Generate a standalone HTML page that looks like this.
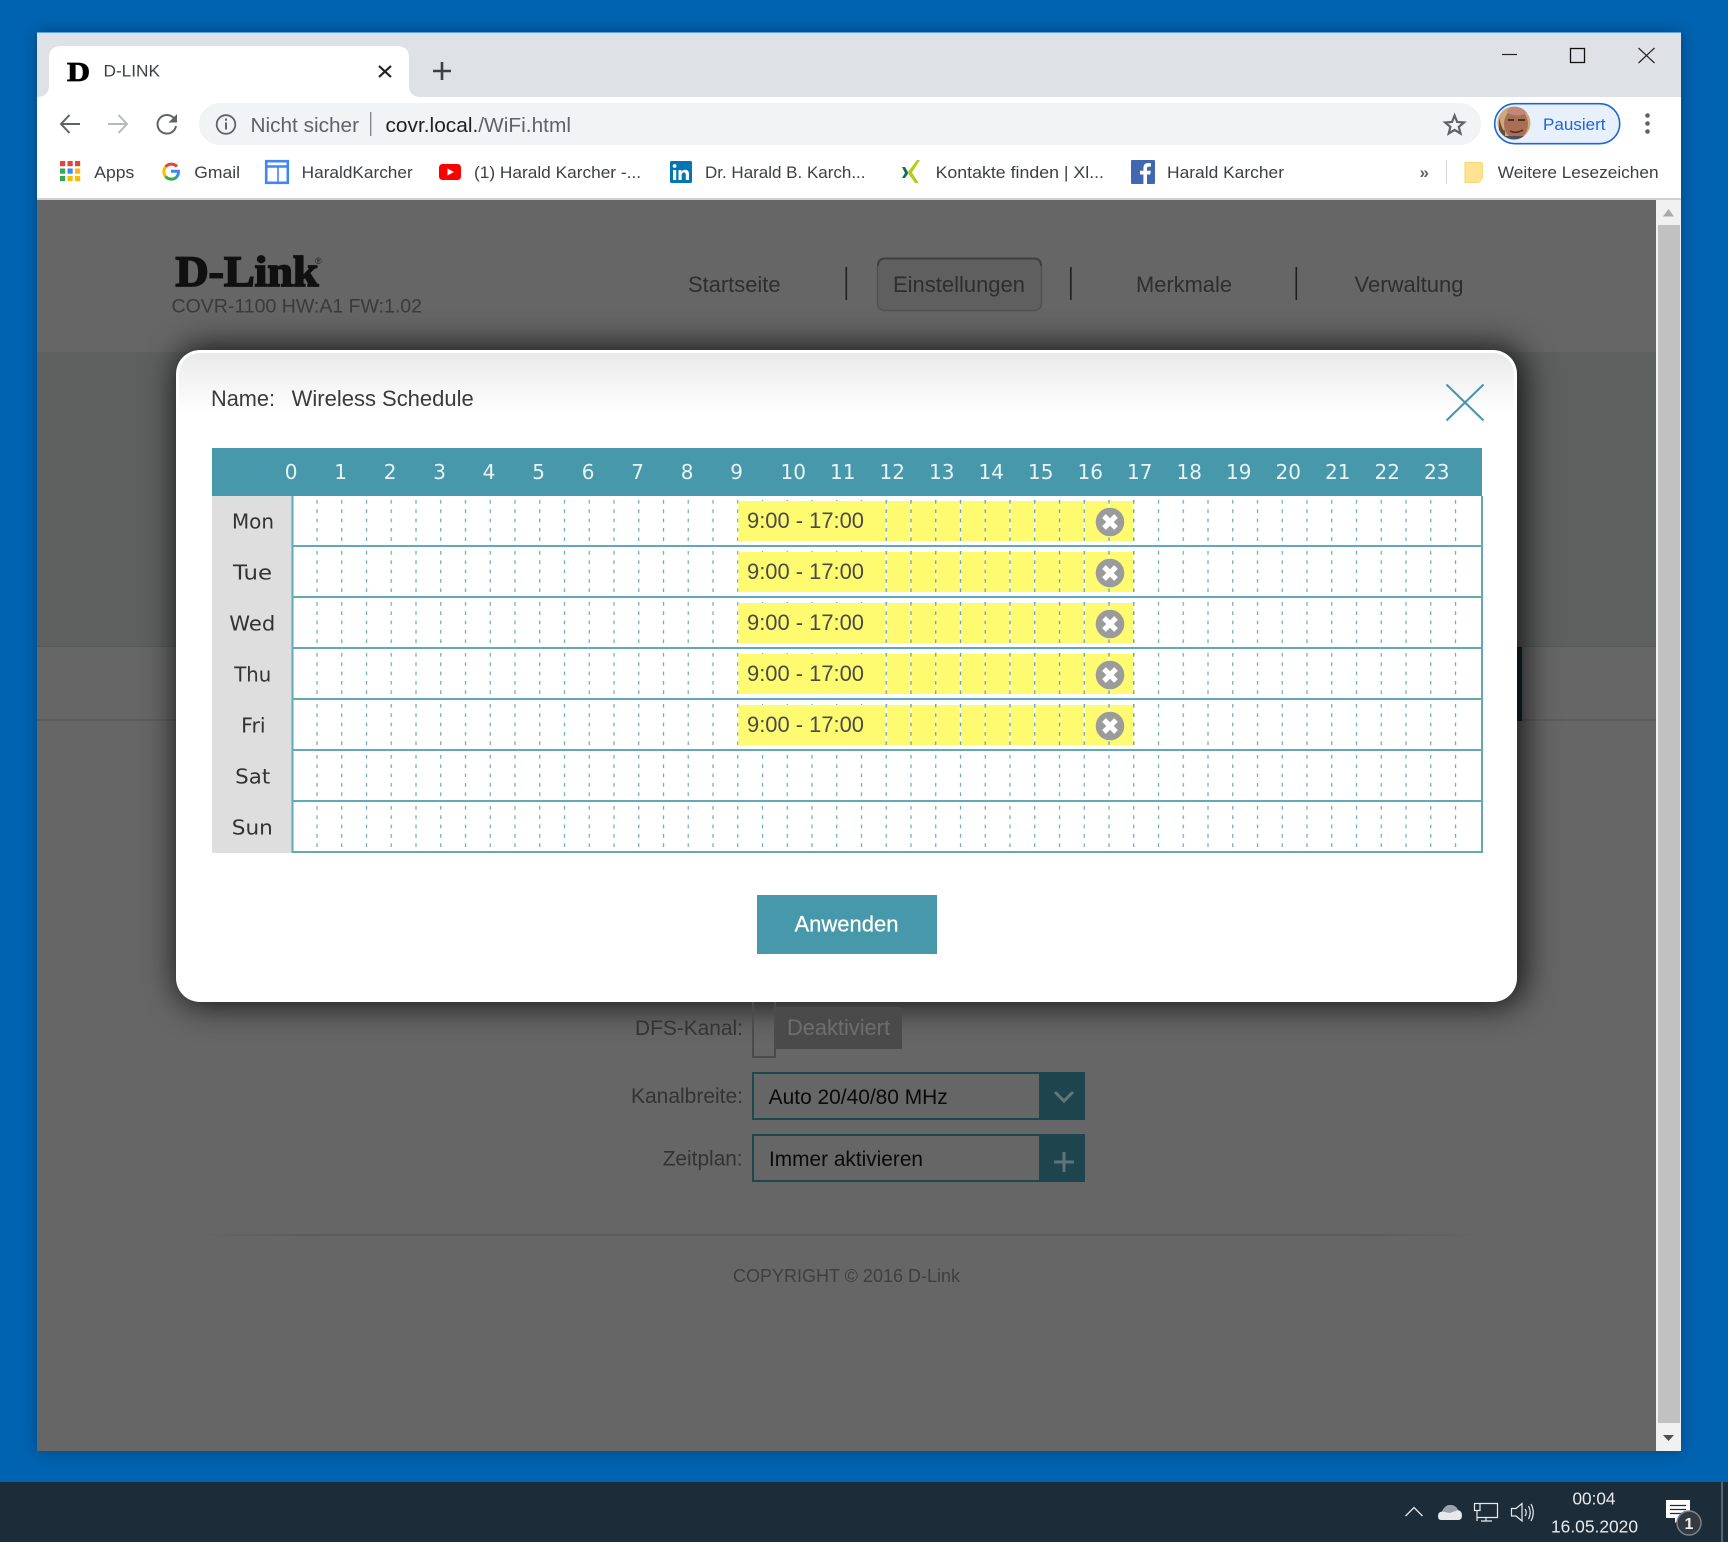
<!DOCTYPE html>
<html lang="de">
<head>
<meta charset="utf-8">
<title>D-LINK</title>
<style>
html,body{margin:0;padding:0;width:1728px;height:1542px;overflow:hidden;background:#0063b1}
div{position:absolute;box-sizing:border-box}
#win{left:37px;top:32px;width:1644px;height:1419px;background:#fff;box-shadow:0 0 16px rgba(0,0,0,.3)}
#strip{left:37px;top:33px;width:1644px;height:64px;background:#dee1e6}
#topline{left:37px;top:32px;width:1644px;height:1px;background:#5da3e6}
#sep{left:37px;top:198px;width:1644px;height:2px;background:#d0d1d3}
#page{left:37px;top:200px;width:1619px;height:1251px;background:#666}
#band{left:37px;top:352px;width:1619px;height:295px;background:#5e6060;border-bottom:1px solid #585858}
#band2{left:37px;top:647px;width:1619px;height:74px;background:#666;border-bottom:2px solid #5c5c5c}
#sliver{left:1510px;top:647px;width:12px;height:74px;background:#13252c}
#foot{left:200px;top:1234px;width:1280px;height:2px;background:linear-gradient(90deg,#666,#5a5a5a 10%,#5a5a5a 90%,#666)}
#sb{left:1656px;top:200px;width:25px;height:1251px;background:#f1f1f1}
#thumb{left:1658px;top:225px;width:22px;height:1198px;background:#c1c1c1}
#task{left:0;top:1482px;width:1728px;height:60px;background:#1c2c39}
#modal{left:176px;top:350px;width:1341px;height:652px;background:#fff;border-radius:24px;box-shadow:4px 0 32px 4px rgba(0,0,0,.76)}
#mg{left:3px;top:3px;width:1335px;height:62px;border-radius:21px 21px 0 0;background:linear-gradient(#e9e9e9,#f3f3f3 40%,#fff)}
svg{position:absolute;left:0;top:0}
text{font-family:"Liberation Sans",sans-serif}
.bm{font-size:17px;fill:#3c4043}
.nav{font-size:22px;fill:#2e2e2e}
.h{font-family:"DejaVu Sans",sans-serif;font-size:20px;fill:#e9f3f5}
.d{font-family:"DejaVu Sans",sans-serif;font-size:20px;fill:#333;text-anchor:middle}
.t{font-size:22px;fill:#4a4a4a}
.l{font-size:20.9px;fill:#333}
</style>
</head>
<body>
<div id="win"></div>
<div id="strip"></div>
<div id="topline"></div>
<div id="sep"></div>
<div id="page"></div>
<div id="band"></div>
<div id="band2"></div>
<div id="sliver"></div>
<div id="foot"></div>
<div id="sb"></div>
<div id="thumb"></div>
<div id="task"></div>
<div id="modal"><div id="mg"></div></div>

<svg width="1728" height="1542" viewBox="0 0 1728 1542" xmlns="http://www.w3.org/2000/svg">
<defs>
<pattern id="dash" patternUnits="userSpaceOnUse" x="316.4" y="496" width="24.75" height="51">
<g fill="#4a9aac">
<rect x="0" y="4" width="1.2" height="3.7"/><rect x="0" y="13.3" width="1.2" height="3.7"/><rect x="0" y="22.6" width="1.2" height="3.7"/><rect x="0" y="32" width="1.2" height="3.7"/><rect x="0" y="41.3" width="1.2" height="3.7"/>
</g>
</pattern>
<pattern id="dashy" patternUnits="userSpaceOnUse" x="316.4" y="496" width="24.75" height="51">
<rect x="0" y="5" width="1.2" height="40" fill="#fff"/>
<g fill="#5c9fb0">
<rect x="0" y="4" width="1.2" height="3.7"/><rect x="0" y="13.3" width="1.2" height="3.7"/><rect x="0" y="22.6" width="1.2" height="3.7"/><rect x="0" y="32" width="1.2" height="3.7"/><rect x="0" y="41.3" width="1.2" height="3.7"/>
</g>
</pattern>
<clipPath id="av"><circle cx="1514" cy="123" r="16.5"/></clipPath>
</defs>

<!-- Tab -->
<path d="M37 97Q49 97 49 85V58Q49 46 61 46H397Q409 46 409 58V85Q409 97 421 97Z" fill="#fff"/>
<text x="67" y="81" font-size="27" font-weight="700" style="font-family:'Liberation Serif',serif" fill="#000" stroke="#000" stroke-width=".8" textLength="23" lengthAdjust="spacingAndGlyphs">D</text>
<text x="103.5" y="76.5" font-size="17" fill="#3c4043" textLength="56.5" lengthAdjust="spacingAndGlyphs">D-LINK</text>
<path d="M379 66L391 77M391 66L379 77" stroke="#222" stroke-width="2.2" fill="none"/>
<path d="M442 62V80M433 71H451" stroke="#3c4043" stroke-width="2.6" fill="none"/>

<!-- Window controls -->
<path d="M1502 54.5H1517" stroke="#222" stroke-width="1.2"/>
<rect x="1570.5" y="48.5" width="14" height="14" fill="none" stroke="#111" stroke-width="1.3"/>
<path d="M1638.5 48L1654.5 63M1654.5 48L1638.5 63" stroke="#222" stroke-width="1.2"/>

<!-- Toolbar -->
<path d="M80 124H61.5M69.5 115L61 124L69.5 133" stroke="#5f6368" stroke-width="2" fill="none"/>
<path d="M108 124H126.5M118.5 115L127 124L118.5 133" stroke="#b7babd" stroke-width="2" fill="none"/>
<path d="M174.5 119A9.3 9.3 0 1 0 176 126" stroke="#5f6368" stroke-width="2" fill="none"/>
<path d="M177 114V122.5H168.5Z" fill="#5f6368"/>
<rect x="199" y="103" width="1282" height="42" rx="21" fill="#f1f3f4"/>
<circle cx="226" cy="124.5" r="9.3" fill="none" stroke="#5f6368" stroke-width="1.8"/>
<rect x="225" y="122.5" width="2" height="7" fill="#5f6368"/><rect x="225" y="118.5" width="2" height="2.2" fill="#5f6368"/>
<text x="250.5" y="132" font-size="20.5" fill="#5f6368" textLength="108.5" lengthAdjust="spacingAndGlyphs">Nicht sicher</text>
<rect x="370" y="112" width="1.4" height="24" fill="#85888c"/>
<text x="385.5" y="132" font-size="20.5" fill="#5f6368" textLength="185.5" lengthAdjust="spacingAndGlyphs"><tspan fill="#202124">covr.local.</tspan>/WiFi.html</text>
<path d="M1454.6 115.5L1457.2 122L1464 122.5L1458.8 126.9L1460.5 133.5L1454.6 129.9L1448.7 133.5L1450.4 126.9L1445.2 122.5L1452 122Z" fill="none" stroke="#5f6368" stroke-width="2.2"/>
<rect x="1494.7" y="103.7" width="125" height="40" rx="20" fill="#e9f0fd" stroke="#1a66d8" stroke-width="1.6"/>
<g clip-path="url(#av)">
<rect x="1497" y="106" width="34" height="34" fill="#d0a878"/>
<ellipse cx="1516" cy="124" rx="12" ry="15" fill="#a96f55"/>
<ellipse cx="1517" cy="111" rx="10" ry="4.5" fill="#c0897a"/>
<path d="M1499 118Q1503 133 1505 130L1505 138L1499 138Z" fill="#5f5042"/>
<path d="M1508 120H1514M1518 120H1525" stroke="#3f251d" stroke-width="1.8"/>
<path d="M1510 131Q1516 134 1523 130" stroke="#5f2a22" stroke-width="1.6" fill="none"/>
<rect x="1498" y="136" width="34" height="6" fill="#4c5060"/>
</g>
<text x="1543" y="130" font-size="17" fill="#1a66d8" textLength="62.5" lengthAdjust="spacingAndGlyphs">Pausiert</text>
<circle cx="1647.5" cy="115.5" r="2.3" fill="#5f6368"/><circle cx="1647.5" cy="123.5" r="2.3" fill="#5f6368"/><circle cx="1647.5" cy="131.5" r="2.3" fill="#5f6368"/>

<!-- Bookmarks -->
<g>
<rect x="60" y="161" width="5.2" height="5.2" fill="#ea4335"/><rect x="67.5" y="161" width="5.2" height="5.2" fill="#ea4335"/><rect x="75" y="161" width="5.2" height="5.2" fill="#ea4335"/>
<rect x="60" y="168.5" width="5.2" height="5.2" fill="#34a853"/><rect x="67.5" y="168.5" width="5.2" height="5.2" fill="#4285f4"/><rect x="75" y="168.5" width="5.2" height="5.2" fill="#fbbc05"/>
<rect x="60" y="176" width="5.2" height="5.2" fill="#34a853"/><rect x="67.5" y="176" width="5.2" height="5.2" fill="#fbbc05"/><rect x="75" y="176" width="5.2" height="5.2" fill="#fbbc05"/>
</g>
<text class="bm" x="94.3" y="178" textLength="40" lengthAdjust="spacingAndGlyphs">Apps</text>
<g fill="none" stroke-width="3">
<path d="M177 166.5A7.8 7.8 0 0 0 165.5 166.8" stroke="#ea4335"/>
<path d="M165.5 166.8A7.8 7.8 0 0 0 165.5 176.5" stroke="#fbbc05"/>
<path d="M165.5 176.5A7.8 7.8 0 0 0 176.5 177.2" stroke="#34a853"/>
<path d="M176.5 177.2A7.8 7.8 0 0 0 178.4 171.3H171" stroke="#4285f4"/>
</g>
<text class="bm" x="194.3" y="178" textLength="45.7" lengthAdjust="spacingAndGlyphs">Gmail</text>
<rect x="266.2" y="161.2" width="21.6" height="21.6" fill="#fff" stroke="#4285f4" stroke-width="2.6"/>
<path d="M266 166.5H288" stroke="#4285f4" stroke-width="2.4"/><path d="M278 167V183" stroke="#4285f4" stroke-width="1.6"/>
<text class="bm" x="301.7" y="178" textLength="111" lengthAdjust="spacingAndGlyphs">HaraldKarcher</text>
<rect x="439" y="164" width="22" height="16" rx="3.5" fill="#f00"/>
<path d="M447.5 168.5L454 172L447.5 175.5Z" fill="#fff"/>
<text class="bm" x="474" y="178" textLength="167" lengthAdjust="spacingAndGlyphs">(1) Harald Karcher -...</text>
<rect x="670" y="161" width="22" height="22" rx="1.5" fill="#0077b5"/>
<rect x="673" y="170" width="3.2" height="10" fill="#fff"/><circle cx="674.6" cy="166" r="1.9" fill="#fff"/>
<path d="M678.5 170H681.5V171.5Q683 169.7 685.3 169.7Q689 169.7 689 174.3V180H685.8V175Q685.8 172.5 684 172.5Q681.7 172.5 681.7 175V180H678.5Z" fill="#fff"/>
<text class="bm" x="705" y="178" textLength="160.5" lengthAdjust="spacingAndGlyphs">Dr. Harald B. Karch...</text>
<path d="M902 167L905 167L908.5 173L905 178L902 178L905 173Z" fill="#0f6f63"/>
<path d="M917 160L920 160L912 172.5L918.5 183L915 183L907.5 172.5Z" fill="#b5cc18"/>
<text class="bm" x="935.6" y="178" textLength="168.4" lengthAdjust="spacingAndGlyphs">Kontakte finden | Xl...</text>
<rect x="1131" y="160" width="24" height="24" rx="1" fill="#4267b2"/>
<path d="M1147 184V174.5H1150.3L1150.8 170.7H1147V168.3Q1147 166.6 1149 166.6H1151V163.2Q1149.8 163 1148.2 163Q1143.4 163 1143.4 167.8V170.7H1140V174.5H1143.4V184Z" fill="#fff"/>
<text class="bm" x="1167" y="178" textLength="117" lengthAdjust="spacingAndGlyphs">Harald Karcher</text>
<text x="1419.5" y="178" font-size="17" fill="#5f6368" font-weight="700">»</text>
<rect x="1446" y="160" width="1" height="24" fill="#d5d7da"/>
<path d="M1465 162.5H1480Q1482.5 162.5 1482.5 165V178L1478.5 182.5H1465Z" fill="#fde293" stroke="#f5d97a" stroke-width="1.2"/>
<text class="bm" x="1497.8" y="178" textLength="160.8" lengthAdjust="spacingAndGlyphs">Weitere Lesezeichen</text>

<!-- Scrollbar arrows -->
<path d="M1668.5 209L1674 216.5H1663Z" fill="#a9a9a9"/>
<path d="M1663 1435H1674L1668.5 1441Z" fill="#505050"/>

<!-- Underlying page -->
<text x="175.5" y="286" font-size="43" font-weight="700" style="font-family:'Liberation Serif',serif" fill="#101010" stroke="#101010" stroke-width="1.7" textLength="143" lengthAdjust="spacingAndGlyphs">D-Link</text>
<text x="315" y="264" font-size="9" fill="#222">®</text>
<text x="171.5" y="312.5" font-size="19.3" fill="#3a3a3a" textLength="250.5" lengthAdjust="spacingAndGlyphs">COVR-1100 HW:A1 FW:1.02</text>
<text class="nav" x="688" y="292" textLength="92.5" lengthAdjust="spacingAndGlyphs">Startseite</text>
<rect x="845.5" y="267" width="1.6" height="33" fill="#1f1f1f"/>
<rect x="877.5" y="258.5" width="164" height="52" rx="7" fill="#5f5f5f" stroke="#505050" stroke-width="1.4"/>
<path d="M878 266Q878 258.5 885 258.5H1034Q1041 258.5 1041 266" fill="none" stroke="#3f3f3f" stroke-width="2"/>
<text class="nav" x="893" y="292" textLength="132" lengthAdjust="spacingAndGlyphs">Einstellungen</text>
<rect x="1070" y="267" width="1.6" height="33" fill="#1f1f1f"/>
<text class="nav" x="1136" y="292" textLength="96" lengthAdjust="spacingAndGlyphs">Merkmale</text>
<rect x="1295.5" y="267" width="1.6" height="33" fill="#1f1f1f"/>
<text class="nav" x="1354.5" y="292" textLength="109" lengthAdjust="spacingAndGlyphs">Verwaltung</text>

<!-- Modal content -->
<text x="211" y="406" font-size="21.8" fill="#3a3a3a" textLength="64" lengthAdjust="spacingAndGlyphs">Name:</text>
<text x="291.7" y="406" font-size="21.8" fill="#3a3a3a" textLength="182" lengthAdjust="spacingAndGlyphs">Wireless Schedule</text>
<path d="M1446.5 384.5L1483.5 420.5M1483.5 384.5L1446.5 420.5" stroke="#4797a9" stroke-width="2.1" fill="none"/>

<rect x="212" y="448" width="1270" height="48" fill="#4798ab"/>
<rect x="212" y="496" width="80" height="357" fill="#dedede"/>
<rect x="292" y="496" width="1190" height="357" fill="#fff"/>

<g>
<text class="h" x="284.8" y="479">0</text><text class="h" x="334.3" y="479">1</text><text class="h" x="383.8" y="479">2</text><text class="h" x="433.3" y="479">3</text><text class="h" x="482.6" y="479">4</text><text class="h" x="532.3" y="479">5</text><text class="h" x="581.8" y="479">6</text><text class="h" x="631.3" y="479">7</text><text class="h" x="680.8" y="479">8</text><text class="h" x="730.3" y="479">9</text>
<text class="h" x="780.5" y="479">10</text><text class="h" x="830" y="479">11</text><text class="h" x="879.5" y="479">12</text><text class="h" x="929" y="479">13</text><text class="h" x="978.5" y="479">14</text><text class="h" x="1028" y="479">15</text><text class="h" x="1077.5" y="479">16</text><text class="h" x="1127" y="479">17</text><text class="h" x="1176.5" y="479">18</text><text class="h" x="1226" y="479">19</text><text class="h" x="1275.5" y="479">20</text><text class="h" x="1325" y="479">21</text><text class="h" x="1374.5" y="479">22</text><text class="h" x="1424" y="479">23</text>
</g>

<text class="d" x="253" y="528.7" textLength="42" lengthAdjust="spacingAndGlyphs">Mon</text>
<text class="d" x="252.5" y="579.7" textLength="39" lengthAdjust="spacingAndGlyphs">Tue</text>
<text class="d" x="252.3" y="630.5" textLength="46" lengthAdjust="spacingAndGlyphs">Wed</text>
<text class="d" x="252.7" y="681.5" textLength="37" lengthAdjust="spacingAndGlyphs">Thu</text>
<text class="d" x="253.4" y="732.5" textLength="24.5" lengthAdjust="spacingAndGlyphs">Fri</text>
<text class="d" x="252.7" y="783.5" textLength="35" lengthAdjust="spacingAndGlyphs">Sat</text>
<text class="d" x="252.3" y="834.5" textLength="41" lengthAdjust="spacingAndGlyphs">Sun</text>

<rect x="316" y="496" width="1150" height="357" fill="url(#dash)" opacity=".85"/>

<g fill="#fffb70">
<rect x="738.4" y="501" width="395" height="40"/>
<rect x="738.4" y="552" width="395" height="40"/>
<rect x="738.4" y="603" width="395" height="40"/>
<rect x="738.4" y="654" width="395" height="40"/>
<rect x="738.4" y="705" width="395" height="40"/>
</g>
<rect x="885" y="496" width="250" height="255" fill="url(#dashy)"/>

<g fill="none" stroke="#62a9b8" stroke-width="2">
<path d="M292 546H1483M292 597H1483M292 648H1483M292 699H1483M292 750H1483M292 801H1483M292 852H1483"/>
<path d="M292.5 496V853M1482 496V853"/>
</g>

<text class="t" x="747" y="528" textLength="117" lengthAdjust="spacingAndGlyphs">9:00 - 17:00</text>
<text class="t" x="747" y="579" textLength="117" lengthAdjust="spacingAndGlyphs">9:00 - 17:00</text>
<text class="t" x="747" y="630" textLength="117" lengthAdjust="spacingAndGlyphs">9:00 - 17:00</text>
<text class="t" x="747" y="681" textLength="117" lengthAdjust="spacingAndGlyphs">9:00 - 17:00</text>
<text class="t" x="747" y="732" textLength="117" lengthAdjust="spacingAndGlyphs">9:00 - 17:00</text>

<g>
<circle cx="1110" cy="522" r="14.3" fill="#9b9b9b"/><path d="M1104 516L1116 528M1116 516L1104 528" stroke="#fff" stroke-width="5.2"/>
<circle cx="1110" cy="573" r="14.3" fill="#9b9b9b"/><path d="M1104 567L1116 579M1116 567L1104 579" stroke="#fff" stroke-width="5.2"/>
<circle cx="1110" cy="624" r="14.3" fill="#9b9b9b"/><path d="M1104 618L1116 630M1116 618L1104 630" stroke="#fff" stroke-width="5.2"/>
<circle cx="1110" cy="675" r="14.3" fill="#9b9b9b"/><path d="M1104 669L1116 681M1116 669L1104 681" stroke="#fff" stroke-width="5.2"/>
<circle cx="1110" cy="726" r="14.3" fill="#9b9b9b"/><path d="M1104 720L1116 732M1116 720L1104 732" stroke="#fff" stroke-width="5.2"/>
</g>

<rect x="757" y="895" width="180" height="59" fill="#4798ab"/>
<text x="794.5" y="931.5" font-size="22" fill="#fff" stroke="#fff" stroke-width=".25" textLength="104" lengthAdjust="spacingAndGlyphs">Anwenden</text>

<!-- Form under modal -->
<text class="l" x="635" y="1035" textLength="108" lengthAdjust="spacingAndGlyphs">DFS-Kanal:</text>
<path d="M753 1002V1057H775V1002" fill="none" stroke="#4b4b4b" stroke-width="2"/>
<rect x="776" y="1007" width="126" height="42" fill="#4a4a4a"/>
<text x="787" y="1035" font-size="22" fill="#6e6e6e" textLength="103" lengthAdjust="spacingAndGlyphs">Deaktiviert</text>

<text class="l" x="631" y="1103" textLength="112" lengthAdjust="spacingAndGlyphs">Kanalbreite:</text>
<rect x="753" y="1073" width="331" height="46" fill="#666" stroke="#1e4750" stroke-width="2"/>
<rect x="1039" y="1072" width="46" height="48" fill="#1e454e"/>
<path d="M1055 1092L1064 1101L1073 1092" fill="none" stroke="#66757b" stroke-width="3"/>
<text x="768.7" y="1104" font-size="20.9" fill="#0a0a0a" textLength="179" lengthAdjust="spacingAndGlyphs">Auto 20/40/80 MHz</text>

<text class="l" x="662.7" y="1165.7" textLength="80" lengthAdjust="spacingAndGlyphs">Zeitplan:</text>
<rect x="753" y="1135" width="331" height="46" fill="#666" stroke="#1e4750" stroke-width="2"/>
<rect x="1039" y="1134" width="46" height="48" fill="#1e454e"/>
<path d="M1064 1152V1172M1054 1162H1074" fill="none" stroke="#5e737a" stroke-width="3"/>
<text x="769" y="1166" font-size="20.9" fill="#0a0a0a" textLength="154" lengthAdjust="spacingAndGlyphs">Immer aktivieren</text>

<text x="733" y="1282" font-size="18" fill="#3e3e3e" textLength="227" lengthAdjust="spacingAndGlyphs">COPYRIGHT © 2016 D-Link</text>

<!-- Taskbar -->
<path d="M1405.5 1516L1414 1507.5L1422.5 1516" fill="none" stroke="#e8eaec" stroke-width="1.3"/>
<path d="M1441 1520Q1438 1520 1438 1516Q1438 1512 1442 1511.5Q1445 1504.5 1451 1505Q1456 1505.5 1458 1510Q1462 1511 1462 1515.5Q1462 1520 1458 1520Z" fill="#e6e8ea"/>
<path d="M1442 1511.5Q1445 1504.5 1451 1505Q1456 1505.5 1458 1510L1450 1513Z" fill="#9aa3ab"/>
<g fill="none" stroke="#e8eaec" stroke-width="1.2">
<path d="M1480 1503.5H1497.5V1517.5H1483"/>
<rect x="1474.5" y="1503.5" width="5.5" height="7"/>
<path d="M1477 1510.5V1521M1477 1517.5H1483M1486 1517.5V1521M1481 1521H1492"/>
<path d="M1511.5 1508.5H1516L1522 1503.5V1521L1516 1516H1511.5Z"/>
<path d="M1525 1509Q1527.5 1512.5 1525 1516M1528.5 1506Q1532 1512.5 1528.5 1519M1531 1504Q1535.5 1512.5 1531 1521"/>
</g>
<text x="1572.5" y="1504.5" font-size="17.4" fill="#e8eaec" textLength="43" lengthAdjust="spacingAndGlyphs">00:04</text>
<text x="1551" y="1532.5" font-size="17.4" fill="#e8eaec" textLength="87" lengthAdjust="spacingAndGlyphs">16.05.2020</text>
<path d="M1666 1500H1690V1518H1680L1675 1523V1518H1666Z" fill="#fff"/>
<path d="M1670 1505.5H1686M1670 1509.5H1686M1670 1513.5H1683" stroke="#1c2c39" stroke-width="1.2"/>
<circle cx="1689" cy="1523" r="12" fill="#343a41" stroke="#7f858b" stroke-width="1.4"/>
<text x="1684.5" y="1529" font-size="16" font-weight="700" fill="#f0f0f0">1</text>
<rect x="1721" y="1482" width="2" height="60" fill="#59646e"/>
</svg>
</body>
</html>
